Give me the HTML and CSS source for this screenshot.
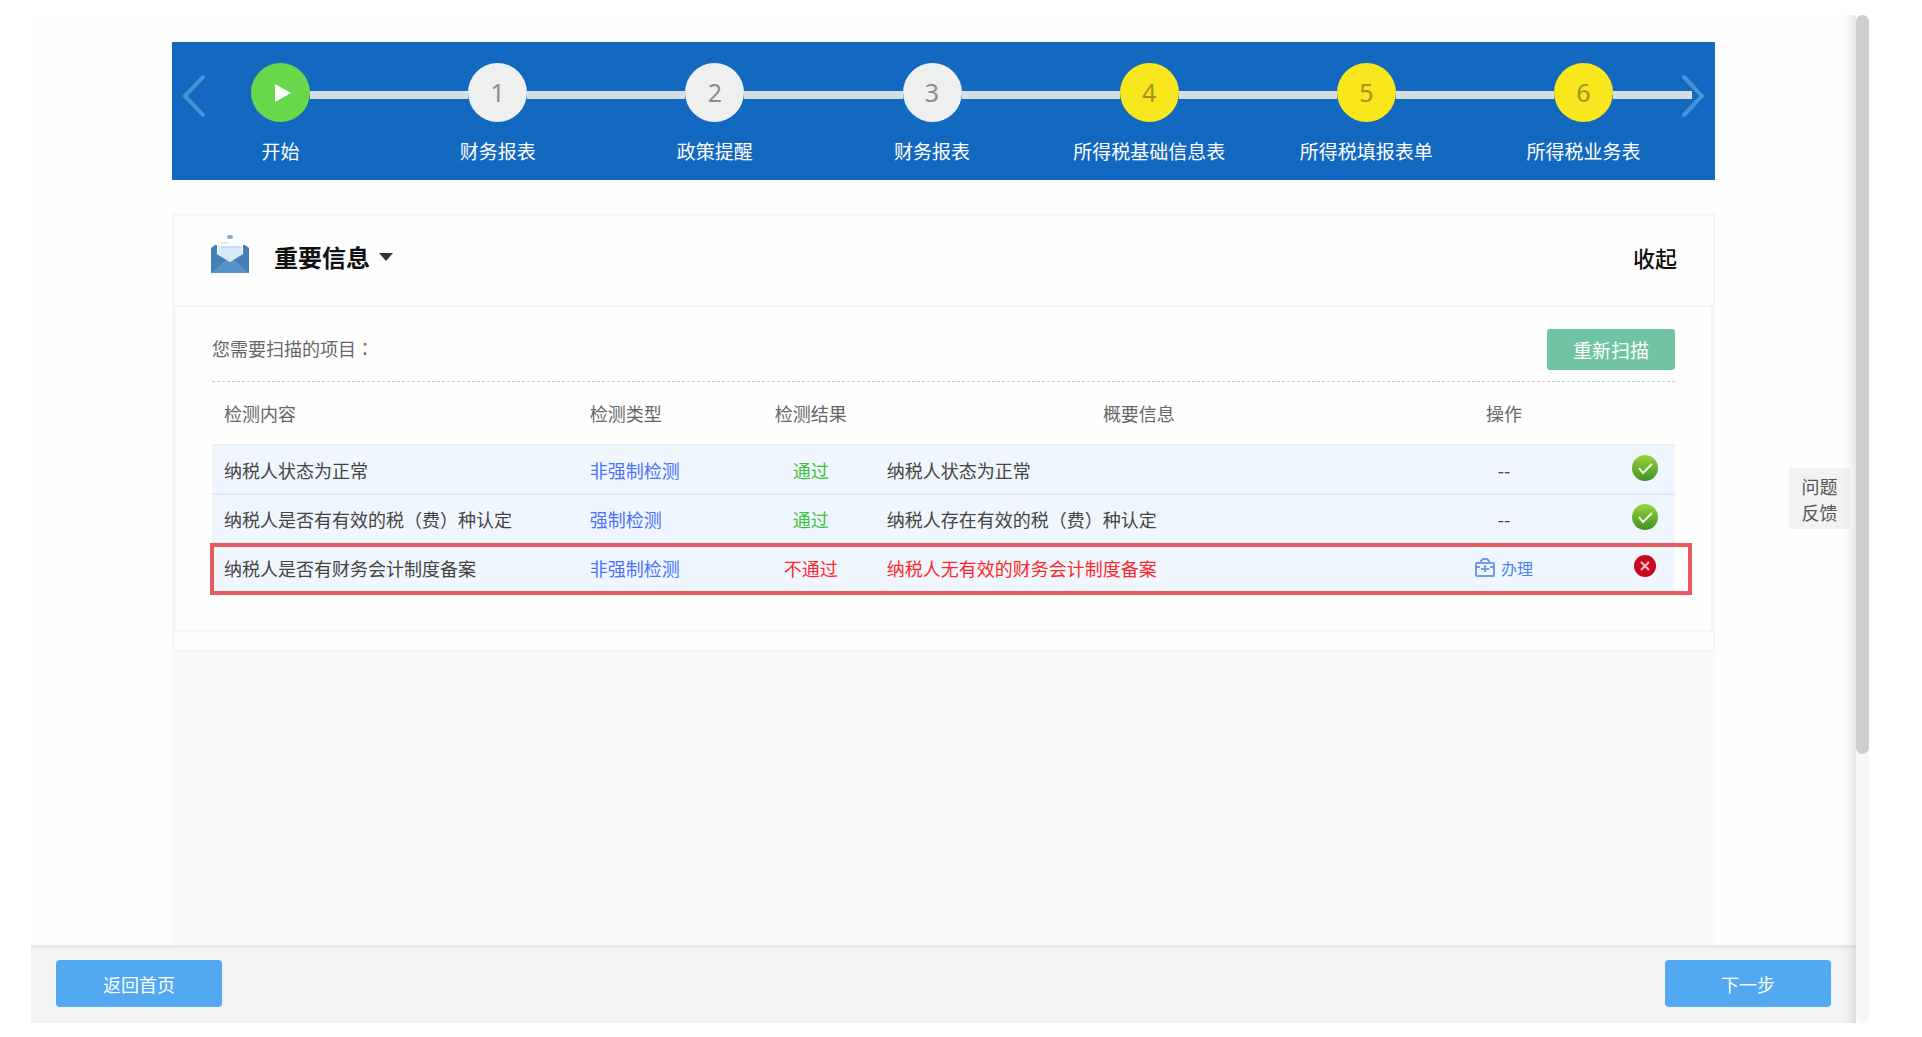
FILE: index.html
```html
<!DOCTYPE html>
<html lang="zh-CN">
<head>
<meta charset="utf-8">
<title>企业所得税申报</title>
<link rel="stylesheet" href="styles.css">
</head>
<body>
<div class="frame">
  <div class="view">
    <main class="content">
      <nav class="wizard" aria-label="申报步骤">
        <button class="arrow arrow-prev" type="button" aria-label="上一组"><svg width="24" height="44" viewBox="0 0 24 44"><path d="M21 3 3 22 21 41"/></svg></button>
        <ol class="steps">
          <li class="step start"><div class="track"><span class="dot"><svg width="18" height="20" viewBox="0 0 18 20"><path d="M1 1 17 10 1 19Z" fill="#fff"/></svg></span></div><span class="label">开始</span></li>
          <li class="step"><div class="track"><span class="dot">1</span></div><span class="label">财务报表</span></li>
          <li class="step"><div class="track"><span class="dot">2</span></div><span class="label">政策提醒</span></li>
          <li class="step"><div class="track"><span class="dot">3</span></div><span class="label">财务报表</span></li>
          <li class="step todo"><div class="track"><span class="dot">4</span></div><span class="label">所得税基础信息表</span></li>
          <li class="step todo"><div class="track"><span class="dot">5</span></div><span class="label">所得税填报表单</span></li>
          <li class="step todo"><div class="track"><span class="dot">6</span></div><span class="label">所得税业务表</span></li>
        </ol>
        <button class="arrow arrow-next" type="button" aria-label="下一组"><svg width="24" height="44" viewBox="0 0 24 44"><path d="M3 3 21 22 3 41"/></svg></button>
      </nav>

      <section class="card">
        <header class="card-head">
          <svg class="mail" width="40" height="40" viewBox="0 0 40 40">
            <path d="M1 14 5 11H35L39 14V39H1Z" fill="#4580b4"/>
            <path d="M1 39 16 26H24L39 39Z" fill="#5594c8"/>
            <path d="M7 10 20 4 33 10V20L20 28 7 20Z" fill="#fdfeff"/>
            <path d="M8 12H32V20L23 26Q20 28 17 26L8 20Z" fill="#d7e8f7"/>
            <path d="M11 9H18M11 13H29" stroke="#b8d2e8" stroke-width="1"/>
            <ellipse cx="20" cy="3" rx="3" ry="2" fill="#83abcf"/>
          </svg>
          <h1 class="title">重要信息</h1>
          <svg class="caret" width="14" height="8" viewBox="0 0 14 8"><path d="M0 0H14L7 8Z" fill="#333"/></svg>
          <button class="collapse" type="button">收起</button>
        </header>
        <div class="panel">
          <div class="scan">
            <p class="scan-text">您需要扫描的项目<span class="centered" lang="zh-TW">：</span></p>
            <button class="rescan" type="button">重新扫描</button>
          </div>
          <table class="checks">
            <colgroup><col class="c-name"><col class="c-type"><col class="c-result"><col class="c-info"><col class="c-action"><col class="c-state"></colgroup>
            <thead>
              <tr><th>检测内容</th><th>检测类型</th><th class="mid">检测结果</th><th class="mid">概要信息</th><th class="mid">操作</th><th></th></tr>
            </thead>
            <tbody>
              <tr><td>纳税人状态为正常</td><td class="type">非强制检测</td><td class="mid pass">通过</td><td>纳税人状态为正常</td><td class="mid">--</td>
                <td class="state"><svg width="26" height="26" viewBox="0 0 26 26"><defs><linearGradient id="ok" x1="0" y1="0" x2="0" y2="1"><stop offset="0" stop-color="#9ad63c"/><stop offset="1" stop-color="#3f8f22"/></linearGradient></defs><circle cx="13" cy="13" r="13" fill="url(#ok)"/><path d="M7 13 11 18 20 9" fill="none" stroke="#f2fbe8" stroke-width="2"/></svg></td></tr>
              <tr><td>纳税人是否有有效的税（费）种认定</td><td class="type">强制检测</td><td class="mid pass">通过</td><td>纳税人存在有效的税（费）种认定</td><td class="mid">--</td>
                <td class="state"><svg width="26" height="26" viewBox="0 0 26 26"><circle cx="13" cy="13" r="13" fill="url(#ok)"/><path d="M7 13 11 18 20 9" fill="none" stroke="#f2fbe8" stroke-width="2"/></svg></td></tr>
              <tr class="flagged"><td>纳税人是否有财务会计制度备案</td><td class="type">非强制检测</td><td class="mid fail">不通过</td><td class="fail">纳税人无有效的财务会计制度备案</td>
                <td class="mid"><a class="handle" href="#"><svg width="20" height="20" viewBox="0 0 20 20" fill="none" stroke="#6f9cf3" stroke-width="2"><rect x="1" y="5" width="18" height="13" rx="1"/><path d="M6 5V3L8 1H12L14 3V5M1 9H5M15 9H19M10 7V14M6 11H14"/></svg>办理</a></td>
                <td class="state"><svg width="26" height="26" viewBox="0 0 26 26"><circle cx="13" cy="13" r="11" fill="#c9081f"/><path d="M9 9 17 17M17 9 9 17" stroke="#f6c5cb" stroke-width="2"/></svg></td></tr>
            </tbody>
          </table>
        </div>
      </section>
    </main>
    <footer class="foot">
      <button class="primary" type="button">返回首页</button>
      <button class="primary" type="button">下一步</button>
    </footer>
    <button class="feedback" type="button">问题<br>反馈</button>
  </div>
  <div class="scrollbar"><div class="thumb"></div></div>
</div>
</body>
</html>
```
FILE: styles.css
```css
* { box-sizing: border-box; }

body {
  margin: 0;
  background: #fff;
  color: #444;
  font: 18px/26px "Noto Sans CJK SC", sans-serif;
}

button {
  margin: 0;
  padding: 0;
  border: 0;
  background: none;
  font: inherit;
  cursor: pointer;
}

svg { display: block; }

.frame {
  display: flex;
  min-height: 100vh;
  padding: 15px 53px 14px 31px;
}

.view {
  position: relative;
  flex: 1;
  display: flex;
  flex-direction: column;
  background: #fefefe;
}

/* soft shade along the scrollbar */
.view::after {
  content: "";
  position: absolute;
  inset: 0 0 0 auto;
  width: 16px;
  background: linear-gradient(to right, rgba(0, 0, 0, 0), rgba(0, 0, 0, .02) 50%, rgba(0, 0, 0, .09));
  pointer-events: none;
}

.content {
  flex: 1;
  display: flex;
  flex-direction: column;
  margin: 0 141px;
  padding-top: 27px;
}

/* step wizard */
.wizard {
  position: relative;
  height: 138px;
  padding: 21px 23px 0 0;
  background: #1368c0;
}

.arrow {
  position: absolute;
  top: 32px;
}
.arrow-prev { left: 10px; }
.arrow-next { right: 10px; }
.arrow path {
  fill: none;
  stroke: #4a92d8;
  stroke-width: 4;
  stroke-linecap: round;
}

.steps {
  display: flex;
  margin: 0;
  padding: 0;
  list-style: none;
}
.step {
  flex: 1 1 0;
  text-align: center;
}
.track {
  display: flex;
  align-items: center;
}
.track::before,
.track::after {
  content: "";
  flex: 1;
  height: 8px;
  margin-top: 5px;
  background: #d5dde5;
}
.start .track::before { background: none; }
.dot {
  display: flex;
  align-items: center;
  justify-content: center;
  width: 59px;
  height: 59px;
  padding-bottom: 2px;
  border-radius: 50%;
  background: #eeefef;
  color: #8c8c8c;
  font: 25px/30px "Noto Sans", sans-serif;
}
.start .dot {
  padding: 0 0 0 4px;
  background: #68d84a;
}
.todo .dot {
  background: #f7e71c;
  color: #a09426;
}
.label {
  display: block;
  margin-top: 16px;
  color: #fff;
  font-size: 19px;
  white-space: nowrap;
}

/* notice card */
.card {
  margin-top: 34px;
  padding-bottom: 18px;
  border: 2px solid #f6f6f6;
  background: #fefefe;
}
.content::after {
  content: "";
  flex: 1;
  background: #fafafa;
}
.card-head {
  display: flex;
  align-items: center;
  height: 89px;
  padding: 0 36px 8px;
}
.mail { margin-bottom: 6px; }
.title {
  margin: 0 9px 0 24px;
  color: #111;
  font-size: 24px;
  line-height: 30px;
}
.collapse {
  margin-left: auto;
  color: #111;
  font-size: 22px;
  font-weight: 500;
}
.panel {
  padding: 22px 36px 38px;
  border: 2px solid #f6f6f6;
}
.scan {
  display: flex;
  align-items: center;
  justify-content: space-between;
  padding-bottom: 11px;
  border-bottom: 1px dashed #ccc;
}
.scan-text {
  margin: 0 0 4px;
  color: #666;
}
/* punctuation set in the middle of its full-width cell */
.centered { font-family: "Noto Sans CJK TC", sans-serif; }
.rescan {
  width: 128px;
  height: 41px;
  border-radius: 3px;
  background: #70c4a3;
  color: #fff;
  font-size: 19px;
}

/* check results */
.checks {
  width: 100%;
  table-layout: fixed;
  border-collapse: collapse;
}
.c-name { width: 25%; }
.c-type { width: 169px; }
.c-result { width: 128px; }
.c-action { width: 202px; }
.c-state { width: 70px; }
.checks th {
  height: 63px;
  padding: 0 12px;
  color: #666;
  font-weight: 400;
  text-align: left;
}
.checks td {
  height: 49px;
  padding: 0 12px;
  border-top: 2px solid #dcebfb;
  background: #f0f6fe;
  white-space: nowrap;
}
.checks tr:first-child td { border-top-color: #e8f0f8; }
.checks .mid { padding: 0; text-align: center; }
.checks .type { color: #4a70ff; }
.checks .pass { color: #3cc23c; }
.checks .fail { color: #ff2828; }
.checks .state { padding: 0 17px 4px 0; }
.state svg { margin-left: auto; }

/* outline round the whole failed row */
.flagged { position: relative; }
.flagged td:first-child::after {
  content: "";
  position: absolute;
  inset: 0 -17px -3px -2px;
  border: 4px solid #e85a5d;
  pointer-events: none;
}
.handle {
  display: flex;
  align-items: center;
  justify-content: center;
  gap: 6px;
  color: #4a84f0;
  font-size: 16px;
  text-decoration: none;
}

/* bottom bar */
.foot {
  display: flex;
  align-items: flex-start;
  justify-content: space-between;
  height: 78px;
  padding: 12px 25px 0;
  border-top: 3px solid #e8e8e8;
  background: #f2f3f3;
}
.primary {
  width: 166px;
  height: 47px;
  border-radius: 4px;
  background: #52a9f2;
  color: #fff;
}

.feedback {
  position: absolute;
  top: 453px;
  right: 6px;
  width: 61px;
  height: 61px;
  background: #f2f2f2;
  color: #555;
}

.scrollbar {
  width: 13px;
  border-radius: 7px;
  background: #f7f7f7;
}
.thumb {
  height: 739px;
  border-radius: 7px;
  background: #cececf;
}
```
